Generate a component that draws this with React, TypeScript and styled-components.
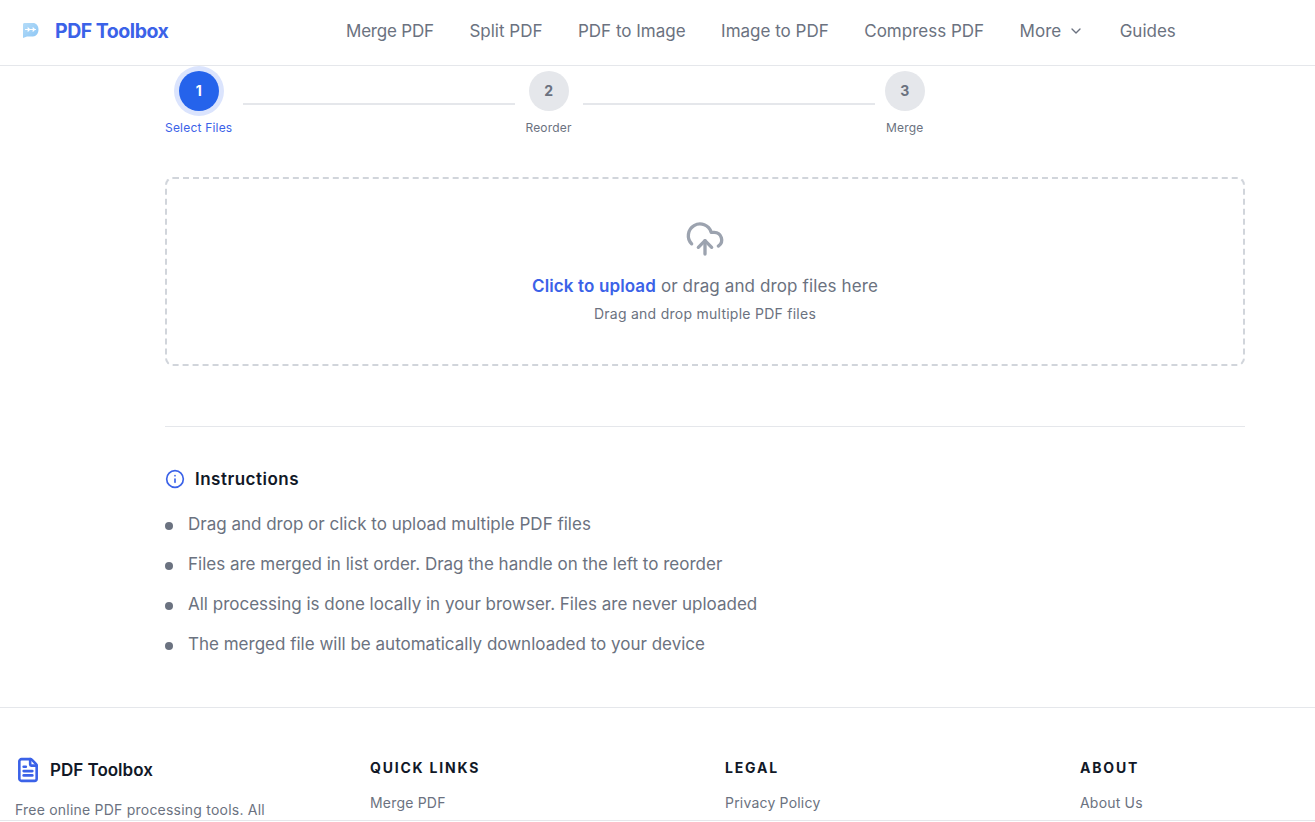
import React from 'react';
import styled, { createGlobalStyle } from 'styled-components';
import { ChevronDown, CloudUpload, Info, FileText } from 'lucide-react';

const GlobalStyle = createGlobalStyle`
  html, body {
    margin: 0;
    padding: 0;
    background: #fff;
    font-family: "Inter", "Liberation Sans", sans-serif;
  }
  * { box-sizing: border-box; }
`;

const Page = styled.div`
  height: 821px;
  overflow: hidden;
  display: flex;
  flex-direction: column;
  border-bottom: 1px solid #e5e7eb;
`;

const Header = styled.header`
  height: 66px;
  flex: none;
  display: flex;
  align-items: center;
  border-bottom: 1px solid #e5e7eb;
  padding: 0 0 4px 22px;
`;

const Brand = styled.a`
  display: flex;
  align-items: center;
  gap: 16px;
  width: 324px;
  font-size: 19.5px;
  font-weight: 700;
  color: #3b62e8;
  letter-spacing: -0.48px;
`;

const Nav = styled.nav`
  display: flex;
  align-items: center;
  gap: 35.5px;
`;

const NavItem = styled.a<{ $tight?: boolean }>`
  display: flex;
  align-items: center;
  gap: 7px;
  font-size: 17px;
  letter-spacing: ${p => (p.$tight ? '-0.2px' : '0')};
  color: #6b7280;
`;

const Main = styled.main`
  width: 1080px;
  margin-left: 165px;
  flex: none;
`;

const Stepper = styled.div`
  display: flex;
  align-items: flex-start;
  padding-top: 5px;
`;

const Step = styled.div`
  display: flex;
  flex-direction: column;
  align-items: center;
  gap: 9px;
`;

const Circle = styled.div<{ $active?: boolean }>`
  width: 40px;
  height: 40px;
  padding-bottom: 1px;
  border-radius: 50%;
  display: flex;
  align-items: center;
  justify-content: center;
  font-size: 14px;
  font-weight: 700;
  color: ${p => (p.$active ? '#fff' : '#6b7280')};
  background: ${p => (p.$active ? '#2563eb' : '#e5e7eb')};
  box-shadow: ${p => (p.$active ? '0 0 0 5px #dbe4fd' : 'none')};
`;

const StepLabel = styled.span<{ $active?: boolean }>`
  font-size: 12px;
  line-height: 16px;
  letter-spacing: 0.2px;
  color: ${p => (p.$active ? '#3b62e8' : '#6b7280')};
`;

const Connector = styled.div<{ $width: number }>`
  width: ${p => p.$width}px;
  height: 2px;
  background: #e5e7eb;
  margin: 32px 10px 0 11px;
`;

const DropZone = styled.div`
  margin-top: 41px;
  height: 189px;
  border: 2px dashed #d1d5db;
  border-radius: 8px;
  display: flex;
  flex-direction: column;
  align-items: center;
  padding-top: 40px;
  color: #9ca3af;
`;

const DropTitle = styled.p`
  margin: 15px 0 0;
  font-size: 17px;
  line-height: 24px;
  letter-spacing: 0.12px;
  color: #6b7280;
`;

const DropLink = styled.span`
  color: #3b62e8;
  font-weight: 600;
`;

const DropHint = styled.p`
  margin: 6px 0 0;
  font-size: 14px;
  line-height: 20px;
  letter-spacing: 0.26px;
  color: #6b7280;
`;

const Divider = styled.hr`
  margin: 60px 0 0;
  border: 0;
  border-top: 1px solid #e5e7eb;
`;

const Instructions = styled.section`
  margin-top: 40px;
`;

const InstructionsTitle = styled.h2`
  margin: 0;
  display: flex;
  align-items: center;
  gap: 10px;
  font-size: 17px;
  line-height: 24px;
  font-weight: 600;
  letter-spacing: 0.5px;
  color: #111827;
  svg { color: #3b62e8; }
`;

const List = styled.ul`
  margin: 13px 0 0;
  padding: 0;
  list-style: none;
`;

const ListItem = styled.li`
  display: flex;
  align-items: center;
  gap: 15px;
  height: 40px;
  font-size: 17px;
  color: #6b7280;
  &::before {
    content: '';
    width: 8px;
    height: 8px;
    border-radius: 50%;
    background: #6b7280;
    margin-top: 3px;
  }
`;

const Footer = styled.footer`
  margin-top: 43px;
  border-top: 1px solid #e5e7eb;
  padding: 50px 0 0 15px;
  display: grid;
  grid-template-columns: 355px 355px 355px 1fr;
  flex: 1;
  min-height: 0;
  overflow: hidden;
`;

const FooterBrand = styled.div`
  display: flex;
  align-items: center;
  gap: 9.5px;
  height: 24px;
  font-size: 17px;
  font-weight: 600;
  color: #111827;
  svg { color: #3b62e8; margin-left: -0.5px; }
`;

const FooterText = styled.p`
  margin: 16px 0 0;
  width: 270px;
  font-size: 14px;
  line-height: 24px;
  letter-spacing: 0.22px;
  color: #6b7280;
`;

const FooterHeading = styled.h3`
  margin: 0;
  font-size: 14px;
  line-height: 20px;
  font-weight: 700;
  letter-spacing: 1.8px;
  color: #111827;
`;

const FooterLink = styled.a`
  display: block;
  margin-top: 15px;
  font-size: 14px;
  line-height: 20px;
  letter-spacing: 0.2px;
  color: #6b7280;
`;

function LogoMark() {
  return (
    <svg width="17" height="17" viewBox="0 0 17 17">
      <defs>
        <linearGradient id="logoFill" x1="0" y1="0" x2="1" y2="1">
          <stop offset="0" stopColor="#b5dcf8" />
          <stop offset="1" stopColor="#8cc6f5" />
        </linearGradient>
      </defs>
      <path d="M2.500 1H11c3 0 5.500 2.500 5.500 6.500S14 14.500 11 14.500H5L1 16V2.500C1 1.600 1.600 1 2.500 1z" fill="url(#logoFill)" />
      <path d="M3.500 7.500h10M6 6l1.500 1.500L6 9M11 6l1.500 1.500L11 9" stroke="#fff" strokeWidth="1.200" strokeLinecap="round" strokeLinejoin="round" fill="none" />
    </svg>
  );
}

export default function App() {
  return (
    <Page>
      <GlobalStyle />
      <Header>
        <Brand><LogoMark />PDF Toolbox</Brand>
        <Nav>
          <NavItem $tight>Merge PDF</NavItem>
          <NavItem>Split PDF</NavItem>
          <NavItem>PDF to Image</NavItem>
          <NavItem>Image to PDF</NavItem>
          <NavItem>Compress PDF</NavItem>
          <NavItem>More <ChevronDown size={16} /></NavItem>
          <NavItem>Guides</NavItem>
        </Nav>
      </Header>
      <Main>
        <Stepper>
          <Step><Circle $active>1</Circle><StepLabel $active>Select Files</StepLabel></Step>
          <Connector $width={272} />
          <Step><Circle>2</Circle><StepLabel>Reorder</StepLabel></Step>
          <Connector $width={292} />
          <Step><Circle>3</Circle><StepLabel>Merge</StepLabel></Step>
        </Stepper>
        <DropZone>
          <CloudUpload size={40} strokeWidth={2} />
          <DropTitle><DropLink>Click to upload</DropLink> or drag and drop files here</DropTitle>
          <DropHint>Drag and drop multiple PDF files</DropHint>
        </DropZone>
        <Divider />
        <Instructions>
          <InstructionsTitle><Info size={20} />Instructions</InstructionsTitle>
          <List>
            <ListItem>Drag and drop or click to upload multiple PDF files</ListItem>
            <ListItem>Files are merged in list order. Drag the handle on the left to reorder</ListItem>
            <ListItem>All processing is done locally in your browser. Files are never uploaded</ListItem>
            <ListItem>The merged file will be automatically downloaded to your device</ListItem>
          </List>
        </Instructions>
      </Main>
      <Footer>
        <div>
          <FooterBrand><FileText size={26} strokeWidth={2.4} />PDF Toolbox</FooterBrand>
          <FooterText>Free online PDF processing tools. All</FooterText>
        </div>
        <div><FooterHeading>QUICK LINKS</FooterHeading><FooterLink>Merge PDF</FooterLink></div>
        <div><FooterHeading>LEGAL</FooterHeading><FooterLink>Privacy Policy</FooterLink></div>
        <div><FooterHeading>ABOUT</FooterHeading><FooterLink>About Us</FooterLink></div>
      </Footer>
    </Page>
  );
}
